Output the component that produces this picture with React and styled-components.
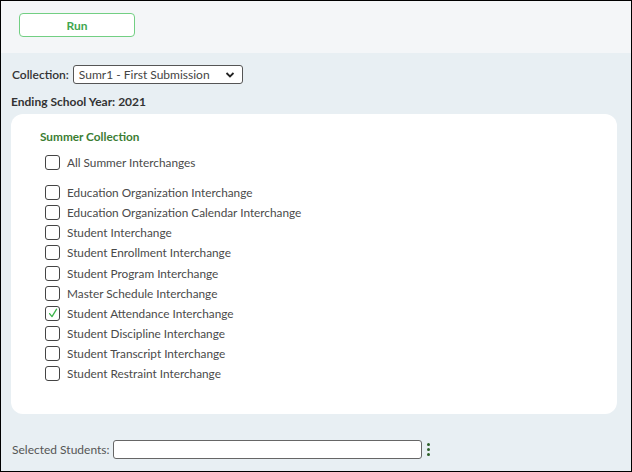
import React from "react";
import styled, { createGlobalStyle } from "styled-components";

const GlobalStyle = createGlobalStyle`
  html, body {
    margin: 0;
    padding: 0;
    background: #fff;
  }
  * {
    box-sizing: border-box;
  }
`;

const interchanges = [
  { label: "Education Organization Interchange" },
  { label: "Education Organization Calendar Interchange" },
  { label: "Student Interchange" },
  { label: "Student Enrollment Interchange" },
  { label: "Student Program Interchange" },
  { label: "Master Schedule Interchange" },
  { label: "Student Attendance Interchange", checked: true },
  { label: "Student Discipline Interchange" },
  { label: "Student Transcript Interchange" },
  { label: "Student Restraint Interchange" },
];

const CheckBox = ({ checked }) => (
  <Box>
    {checked ? (
      <svg width="12" height="12" viewBox="0 0 12 12">
        <path d="M2.6 6.6 L5 9.6 L9.6 2.2" fill="none" stroke="#3cb44a" strokeWidth="1.3" strokeLinecap="round" strokeLinejoin="round" />
      </svg>
    ) : null}
  </Box>
);

const App = () => {
  return (
    <>
      <GlobalStyle />
      <Frame>
        <TopBar>
          <RunButton type="button">Run</RunButton>
        </TopBar>

        <Main>
          <FieldRow>
            <Label>Collection:</Label>
            <Select>
              <span>Sumr1 - First Submission</span>
              <svg width="10" height="8" viewBox="0 0 10 8">
                <path d="M1.5 2 L5 5.5 L8.5 2" fill="none" stroke="#222" strokeWidth="1.8" />
              </svg>
            </Select>
          </FieldRow>

          <YearText>Ending School Year: 2021</YearText>

          <Card>
            <CardTitle>Summer Collection</CardTitle>
            <CheckRow $gap={10}>
              <CheckBox />
              <span>All Summer Interchanges</span>
            </CheckRow>
            <CheckList>
              {interchanges.map((item, index) => (
                <CheckRow key={index}>
                  <CheckBox checked={item.checked} />
                  <span>{item.label}</span>
                </CheckRow>
              ))}
            </CheckList>
          </Card>

          <StudentsRow>
            <SmallLabel>Selected Students:</SmallLabel>
            <TextInput />
            <Kebab>
              <i />
              <i />
              <i />
            </Kebab>
          </StudentsRow>
        </Main>
      </Frame>
    </>
  );
};

const Frame = styled.div`
  width: 632px;
  height: 472px;
  border: 1px solid #000;
  display: flex;
  flex-direction: column;
  font-family: Lato, "Open Sans", sans-serif;
  overflow: hidden;
`;

const TopBar = styled.div`
  height: 52px;
  background: #f4f6f8;
  padding: 12px 0 0 18px;
`;

const RunButton = styled.button`
  width: 116px;
  height: 24px;
  border: 1.5px solid #72cf83;
  border-radius: 4px;
  background: #fff;
  color: #3fa64f;
  font-family: Lato, sans-serif;
  font-size: 12px;
  font-weight: 700;
  padding: 0;
`;

const Main = styled.div`
  flex: 1;
  background: #e8eff3;
  padding: 12px 14px 0 10px;
  display: flex;
  flex-direction: column;
`;

const FieldRow = styled.div`
  display: flex;
  align-items: center;
  gap: 4px;
  height: 19px;
  padding-left: 1px;
`;

const Label = styled.span`
  font-size: 12px;
  color: #333;
  font-weight: 600;
`;

const Select = styled.div`
  width: 170px;
  height: 19px;
  border: 1px solid #555;
  border-radius: 3px;
  background: #fff;
  display: flex;
  align-items: center;
  justify-content: space-between;
  padding: 0 7px 0 5px;
  font-size: 12px;
  color: #444;
`;

const YearText = styled.div`
  margin-top: 10px;
  font-size: 12px;
  font-weight: 700;
  color: #333;
`;

const Card = styled.div`
  margin-top: 5px;
  height: 300px;
  background: #fff;
  border-radius: 12px;
  padding: 15px 0 0 29px;
`;

const CardTitle = styled.div`
  font-size: 11.8px;
  font-weight: 700;
  color: #3b7d33;
  margin-bottom: 8px;
`;

const CheckList = styled.div`
  display: flex;
  flex-direction: column;
`;

const CheckRow = styled.div`
  display: flex;
  align-items: center;
  gap: 7px;
  height: 20.2px;
  padding-left: 4px;
  margin-bottom: ${(p) => p.$gap || 0}px;
  font-size: 11.8px;
  color: #4a4a4a;
`;

const Box = styled.div`
  width: 15px;
  height: 15px;
  border: 1.3px solid #444;
  border-radius: 3px;
  display: flex;
  align-items: center;
  justify-content: center;
  margin-left: 1px;
`;

const StudentsRow = styled.div`
  margin-top: 26px;
  display: flex;
  align-items: center;
  gap: 3px;
`;

const SmallLabel = styled.span`
  font-size: 12px;
  color: #555;
  margin-left: 1px;
`;

const TextInput = styled.div`
  width: 309px;
  height: 19px;
  border: 1px solid #666;
  border-radius: 3px;
  background: #fff;
`;

const Kebab = styled.div`
  display: flex;
  flex-direction: column;
  gap: 2px;
  margin-left: 2px;

  i {
    display: block;
    width: 3px;
    height: 3px;
    border-radius: 50%;
    background: #2e5f2a;
  }
`;

export default App;
